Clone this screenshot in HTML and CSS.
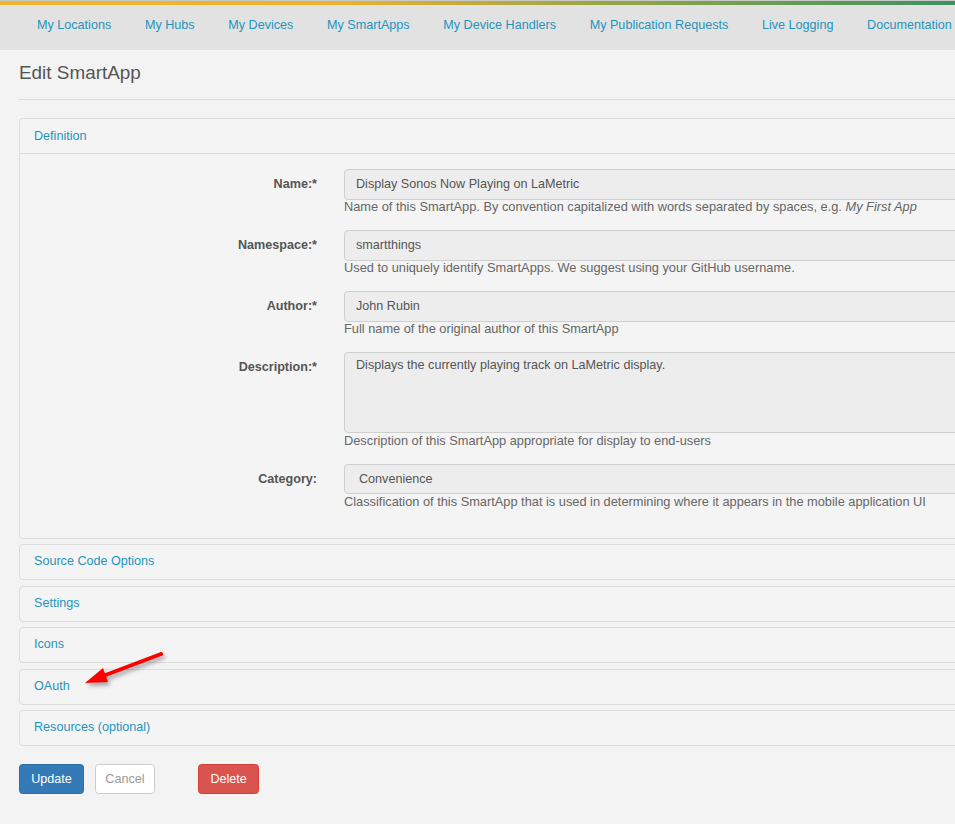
FILE: index.html
```html
<!DOCTYPE html>
<html lang="en">
<head>
<meta charset="utf-8">
<title>Edit SmartApp</title>
<link rel="stylesheet" href="styles.css">
</head>
<body>
<div class="topline"></div>
<nav class="navbar">
  <a class="nav-link" href="#">My Locations</a>
  <a class="nav-link" href="#">My Hubs</a>
  <a class="nav-link" href="#">My Devices</a>
  <a class="nav-link" href="#">My SmartApps</a>
  <a class="nav-link" href="#">My Device Handlers</a>
  <a class="nav-link" href="#">My Publication Requests</a>
  <a class="nav-link" href="#">Live Logging</a>
  <a class="nav-link" href="#">Documentation</a>
</nav>
<main class="page">
  <h1 class="title">Edit SmartApp</h1>
  <div class="rule"></div>

  <section class="panel">
    <div class="panel-heading open"><a href="#">Definition</a></div>
    <div class="panel-body">
      <div class="form-row">
        <label class="label">Name:*</label>
        <div class="field">
          <div class="input">Display Sonos Now Playing on LaMetric</div>
          <div class="help">Name of this SmartApp. By convention capitalized with words separated by spaces, e.g. <em>My First App</em></div>
        </div>
      </div>
      <div class="form-row">
        <label class="label">Namespace:*</label>
        <div class="field">
          <div class="input">smartthings</div>
          <div class="help">Used to uniquely identify SmartApps. We suggest using your GitHub username.</div>
        </div>
      </div>
      <div class="form-row">
        <label class="label">Author:*</label>
        <div class="field">
          <div class="input">John Rubin</div>
          <div class="help">Full name of the original author of this SmartApp</div>
        </div>
      </div>
      <div class="form-row">
        <label class="label">Description:*</label>
        <div class="field">
          <div class="textarea">Displays the currently playing track on LaMetric display.</div>
          <div class="help">Description of this SmartApp appropriate for display to end-users</div>
        </div>
      </div>
      <div class="form-row last">
        <label class="label">Category:</label>
        <div class="field">
          <div class="input select">Convenience</div>
          <div class="help">Classification of this SmartApp that is used in determining where it appears in the mobile application UI</div>
        </div>
      </div>
    </div>
  </section>

  <section class="panel"><div class="panel-heading"><a href="#">Source Code Options</a></div></section>
  <section class="panel"><div class="panel-heading"><a href="#">Settings</a></div></section>
  <section class="panel"><div class="panel-heading"><a href="#">Icons</a></div></section>
  <section class="panel"><div class="panel-heading"><a href="#">OAuth</a></div></section>
  <section class="panel"><div class="panel-heading"><a href="#">Resources (optional)</a></div></section>

  <div class="actions">
    <button class="btn btn-primary">Update</button>
    <button class="btn btn-default">Cancel</button>
    <button class="btn btn-danger">Delete</button>
  </div>
</main>

<svg class="arrow" width="100" height="50" viewBox="0 0 100 50" aria-hidden="true">
  <line x1="86" y1="9" x2="28" y2="31" stroke="#f00" stroke-width="4" stroke-linecap="round"/>
  <polygon points="10,38 28,23 33,37" fill="#f00"/>
</svg>
</body>
</html>
```

FILE: styles.css
```css
html, body {
  margin: 0;
  padding: 0;
  overflow: hidden;
  background: #f3f3f3;
}

body {
  font-family: "Liberation Sans", Arial, sans-serif;
  font-size: 12.6px;
  line-height: 18px;
  color: #555;
  position: relative;
  width: 955px;
  height: 824px;
}

a {
  color: #1f95bd;
  text-decoration: none;
}

.topline {
  height: 4px;
  border-top: 1px solid #c9c9c9;
  background: linear-gradient(to right, #f3b62a 0%, #ecb32b 35%, #b9aa3b 52%, #84a449 70%, #3d9260 100%);
}

.navbar {
  height: 45px;
  background: #e2e2e2;
  display: flex;
  align-items: flex-start;
  gap: 33.7px;
  padding-left: 37px;
  white-space: nowrap;
  box-sizing: border-box;
  overflow: hidden;
}

.nav-link {
  padding-top: 10.5px;
  line-height: 18px;
  font-size: 12.6px;
}

.page {
  width: 1300px;
  padding-left: 19px;
  box-sizing: border-box;
}

.title {
  margin: 12px 0 0;
  height: 21px;
  line-height: 21px;
  font-size: 18.9px;
  font-weight: normal;
  color: #555;
}

.rule {
  margin-top: 16px;
  border-top: 1px solid #dcdcdc;
  margin-bottom: 18px;
}

.panel {
  border: 1px solid #dcdcdc;
  border-radius: 4px;
  background: #f4f4f4;
  margin-bottom: 5.5px;
}

.panel-heading {
  height: 34px;
  padding: 7px 14px 0;
  box-sizing: border-box;
  line-height: 18px;
}

.panel-heading.open {
  border-bottom: 1px solid #dcdcdc;
  height: 35px;
  padding-top: 7.5px;
}

.panel-body {
  padding: 15px 13px 29px;
}

.form-row {
  display: grid;
  grid-template-columns: 284px 1fr;
  column-gap: 27px;
  margin-bottom: 16px;
}

.form-row.last {
  margin-bottom: 0;
}

.label {
  text-align: right;
  font-weight: bold;
  line-height: 30px;
  color: #555;
}

.input,
.textarea {
  height: 30.5px;
  box-sizing: border-box;
  border: 1px solid #cfcfcf;
  border-radius: 4px;
  background: #ededed;
  padding: 0 11px;
  line-height: 28px;
  color: #555;
}

.input.select {
  padding-left: 14px;
}

.textarea {
  height: 81px;
  padding-top: 3px;
  line-height: 18px;
}

.help {
  padding-top: 0.5px;
  line-height: 14px;
  font-size: 12.8px;
  color: #666;
}

.help em {
  font-style: italic;
}

.actions {
  display: flex;
  margin-top: 18px;
}

.btn {
  font-family: "Liberation Sans", Arial, sans-serif;
  font-size: 12.6px;
  line-height: 18px;
  height: 30px;
  padding: 5px 10.8px;
  border: 1px solid transparent;
  border-radius: 3.6px;
  box-sizing: border-box;
  margin: 0;
}

.btn-primary {
  background: #337ab7;
  border-color: #2e6da4;
  color: #fff;
  min-width: 65px;
}

.btn-default {
  background: #fff;
  border-color: #ccc;
  color: #999;
  margin-left: 10.5px;
  padding: 5px 9.8px;
}

.btn-danger {
  background: #d9534f;
  border-color: #d43f3a;
  color: #fff;
  margin-left: 42.5px;
  padding: 5px 11.6px;
}

.arrow {
  position: absolute;
  left: 75px;
  top: 645px;
  filter: drop-shadow(2px 3px 2px rgba(0, 0, 0, 0.35));
}
```
